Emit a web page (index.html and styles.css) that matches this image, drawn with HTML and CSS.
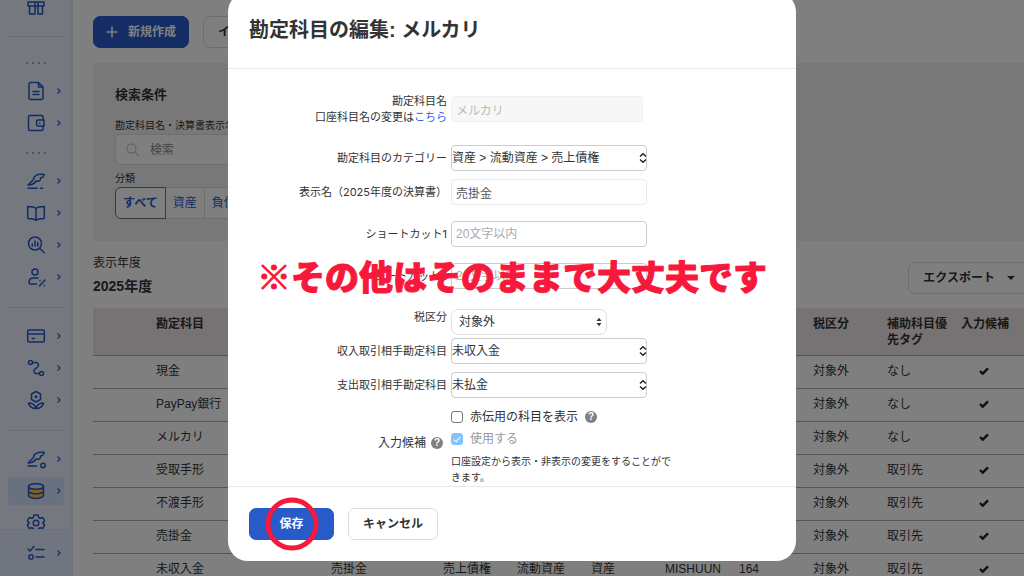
FILE: index.html
```html
<!DOCTYPE html>
<html lang="ja">
<head>
    <meta charset="UTF-8">
    <meta name="viewport" content="width=device-width, initial-scale=1.0">
    <title>勘定科目の編集</title>
    <link rel="stylesheet" href="styles.css">
</head>
<body>

    <div class="app">
        <!-- Sidebar -->
        <aside class="sidebar">
            <nav class="sidebar-nav">
                <a href="#" class="nav-item" aria-label="特典">
                    <svg class="icon" viewBox="0 0 20 20"><path d="M2 6h16v4H2zM3.500 10v8h5.500v-8M12 10v8h4.500v-8M9 6v4M12 6v4"/></svg>
                </a>
                <hr class="nav-divider">
                <div class="nav-dots"><i></i><i></i><i></i><i></i></div>
                <a href="#" class="nav-item" aria-label="書類">
                    <svg class="icon" viewBox="0 0 20 20"><path d="M4.500 1.500h8l4.500 4.500v11a1.500 1.500 0 0 1-1.500 1.500h-11A1.500 1.500 0 0 1 3 17V3a1.500 1.500 0 0 1 1.500-1.500zM12.500 1.500V6H17M7 10.500h6M7 13.500h6"/></svg>
                    <svg class="chevron" viewBox="0 0 6 8"><path d="M1.500 1.500 4 4 1.500 6.500"/></svg>
                </a>
                <a href="#" class="nav-item" aria-label="口座">
                    <svg class="icon" viewBox="0 0 20 20"><path d="M17 6.500V4a1.500 1.500 0 0 0-1.500-1.500H4A1.500 1.500 0 0 0 2.500 4v12A1.500 1.500 0 0 0 4 17.500h11.500A1.500 1.500 0 0 0 17 16v-2.500M12 7h6v6h-6a1.500 1.500 0 0 1-1.500-1.500v-3A1.500 1.500 0 0 1 12 7zM13.500 10h.5"/></svg>
                    <svg class="chevron" viewBox="0 0 6 8"><path d="M1.500 1.500 4 4 1.500 6.500"/></svg>
                </a>
                <div class="nav-dots"><i></i><i></i><i></i><i></i></div>
                <a href="#" class="nav-item" aria-label="記帳">
                    <svg class="icon" viewBox="0 0 20 20"><path d="M2 14 7.500 8.500C7.500 5 11 2.500 18.200 3.500c-.3 2-1.500 3.200-3.700 3.500.5 2.500-1.700 4-4.500 3-1.500 2.500-3.500 4-8 4M2 17.200h9M14.500 17.200h2"/></svg>
                    <svg class="chevron" viewBox="0 0 6 8"><path d="M1.500 1.500 4 4 1.500 6.500"/></svg>
                </a>
                <a href="#" class="nav-item" aria-label="帳簿">
                    <svg class="icon" viewBox="0 0 20 20"><path d="M10 5.500C8.500 4 6 3.500 1.700 3.500v12c4.300 0 6.800.5 8.300 2 1.500-1.500 4-2 8.300-2v-12c-4.300 0-6.800.5-8.300 2zM10 5.500v12"/></svg>
                    <svg class="chevron" viewBox="0 0 6 8"><path d="M1.500 1.500 4 4 1.500 6.500"/></svg>
                </a>
                <a href="#" class="nav-item" aria-label="分析">
                    <svg class="icon" viewBox="0 0 20 20"><circle cx="9" cy="8.500" r="6.500"/><path d="m13.700 13.200 4.500 4.500M6.300 9v2M9 6v5M11.700 7.500V11"/></svg>
                    <svg class="chevron" viewBox="0 0 6 8"><path d="M1.500 1.500 4 4 1.500 6.500"/></svg>
                </a>
                <a href="#" class="nav-item" aria-label="税務">
                    <svg class="icon" viewBox="0 0 20 20"><circle cx="9" cy="5" r="3"/><path d="M10.500 17H4.500A1.500 1.500 0 0 1 3 15.500C3 12.500 5 11 7.500 11H12M19 13l-5.500 6M14 13.500v.2M18.500 18.500v.2"/></svg>
                    <svg class="chevron" viewBox="0 0 6 8"><path d="M1.500 1.500 4 4 1.500 6.500"/></svg>
                </a>
                <hr class="nav-divider">
                <a href="#" class="nav-item" aria-label="カード">
                    <svg class="icon" viewBox="0 0 20 20"><rect x="1.700" y="4" width="16.600" height="12" rx="1.500"/><path d="M1.700 8h16.600M6 12.500h2.500"/></svg>
                    <svg class="chevron" viewBox="0 0 6 8"><path d="M1.500 1.500 4 4 1.500 6.500"/></svg>
                </a>
                <a href="#" class="nav-item" aria-label="連携">
                    <svg class="icon" viewBox="0 0 20 20"><circle cx="4.500" cy="4.500" r="2"/><circle cx="15.500" cy="15.500" r="2"/><path d="M6.500 4.500H10a2.500 2.500 0 0 1 2 4l-3.500 3a2.500 2.500 0 0 0 1.500 4h3.500"/></svg>
                    <svg class="chevron" viewBox="0 0 6 8"><path d="M1.500 1.500 4 4 1.500 6.500"/></svg>
                </a>
                <a href="#" class="nav-item" aria-label="開業">
                    <svg class="icon" viewBox="0 0 20 20"><path d="m10 1.500 4.500 2.500v5.500L10 12 5.500 9.500V4zM10 18.500c-4.500 0-6.500-1.500-7.500-5.500 4 0 6.500 1.500 7.500 5.500zM10 18.500c4.500 0 6.500-1.500 7.500-5.500-4 0-6.500 1.500-7.500 5.500z"/><circle class="fill" cx="10" cy="6.800" r="1.500"/></svg>
                    <svg class="chevron" viewBox="0 0 6 8"><path d="M1.500 1.500 4 4 1.500 6.500"/></svg>
                </a>
                <hr class="nav-divider">
                <a href="#" class="nav-item" aria-label="記帳設定">
                    <svg class="icon" viewBox="0 0 20 20"><path d="M2 14 7.500 8.500C7.500 5 11 2.500 18.200 3.500c-.3 2-1.500 3.200-3.700 3.500.5 2.500-1.700 4-4.500 3-1.500 2.500-3.500 4-8 4M2 17h8.500"/><circle cx="17" cy="16.500" r="2.200"/></svg>
                    <svg class="chevron" viewBox="0 0 6 8"><path d="M1.500 1.500 4 4 1.500 6.500"/></svg>
                </a>
                <a href="#" class="nav-item active" aria-label="マスタ">
                    <svg class="icon" viewBox="0 0 20 20"><path class="gold" d="M2.500 5.500v9c0 1.500 3.500 3 7.500 3s7.500-1.500 7.500-3v-9"/><ellipse class="pale" cx="10" cy="5.500" rx="7.500" ry="2.800"/><path d="M2.500 10c0 1.500 3.500 3 7.500 3s7.500-1.500 7.500-3"/></svg>
                    <svg class="chevron" viewBox="0 0 6 8"><path d="M1.500 1.500 4 4 1.500 6.500"/></svg>
                </a>
                <a href="#" class="nav-item" aria-label="設定">
                    <svg class="icon" viewBox="0 0 20 20"><path d="M8 2h4l.7 2.500 1.500.8 2.500-.8 1.900 3.400L16.800 10l1.800 2.100-1.900 3.400-2.500-.8-1.500.8L12 18H8l-.7-2.500-1.500-.8-2.500.8-1.900-3.400L3.200 10 1.400 7.900l1.900-3.400 2.500.8 1.500-.8z"/><circle cx="10" cy="10" r="2.800"/></svg>
                </a>
            </nav>
            <div class="sidebar-footer">
                <a href="#" class="nav-item" aria-label="やること">
                    <svg class="icon" viewBox="0 0 20 20"><path d="m2 6 2 2 4-4.500M10 6.500h8M10 14h8"/><rect x="3" y="12" width="4" height="4" rx="1"/></svg>
                    <svg class="chevron" viewBox="0 0 6 8"><path d="M1.500 1.500 4 4 1.500 6.500"/></svg>
                </a>
            </div>
        </aside>

        <!-- Account list page -->
        <main class="main">
            <div class="content">
                <div class="actions">
                    <button class="btn btn-primary btn-create">
                        <svg class="plus" viewBox="0 0 12 12"><path d="M6 .5v11M.5 6h11"/></svg>
                        新規作成
                    </button>
                    <button class="btn">インポート</button>
                </div>

                <section class="search-panel">
                    <h2>検索条件</h2>
                    <label class="search-label" for="keyword">勘定科目名・決算書表示名</label>
                    <div class="search-box">
                        <svg viewBox="0 0 14 14"><circle cx="5.500" cy="5.500" r="4.500"/><path d="m9 9 4 4"/></svg>
                        <input id="keyword" type="text" placeholder="検索">
                    </div>
                    <div class="search-label">分類</div>
                    <div class="tabs">
                        <button class="tab selected">すべて</button>
                        <button class="tab">資産</button>
                        <button class="tab">負債</button>
                    </div>
                </section>

                <div class="year-bar">
                    <div>
                        <div class="year-label">表示年度</div>
                        <div class="year-value">2025年度</div>
                    </div>
                    <button class="btn btn-export">エクスポート<span class="caret"></span></button>
                </div>

                <table class="accounts">
                    <colgroup>
                        <col class="col-lead"><col class="col-name"><col class="col-display">
                        <col class="col"><col class="col"><col class="col"><col class="col"><col class="col"><col class="col"><col class="col">
                        <col>
                    </colgroup>
                    <thead>
                        <tr><th></th><th>勘定科目</th><th></th><th></th><th></th><th></th><th></th><th></th><th>税区分</th><th>補助科目優先タグ</th><th>入力候補</th></tr>
                    </thead>
                    <tbody>
                        <tr><td></td><td>現金</td><td></td><td></td><td></td><td></td><td></td><td></td><td>対象外</td><td>なし</td><td><svg class="tick" viewBox="0 0 10 8"><path d="m1 4 2.700 2.700L9 1.300"/></svg></td></tr>
                        <tr><td></td><td>PayPay銀行</td><td></td><td></td><td></td><td></td><td></td><td></td><td>対象外</td><td>なし</td><td><svg class="tick" viewBox="0 0 10 8"><path d="m1 4 2.700 2.700L9 1.300"/></svg></td></tr>
                        <tr><td></td><td>メルカリ</td><td></td><td></td><td></td><td></td><td></td><td></td><td>対象外</td><td>なし</td><td><svg class="tick" viewBox="0 0 10 8"><path d="m1 4 2.700 2.700L9 1.300"/></svg></td></tr>
                        <tr><td></td><td>受取手形</td><td></td><td></td><td></td><td></td><td></td><td></td><td>対象外</td><td>取引先</td><td><svg class="tick" viewBox="0 0 10 8"><path d="m1 4 2.700 2.700L9 1.300"/></svg></td></tr>
                        <tr><td></td><td>不渡手形</td><td></td><td></td><td></td><td></td><td></td><td></td><td>対象外</td><td>取引先</td><td><svg class="tick" viewBox="0 0 10 8"><path d="m1 4 2.700 2.700L9 1.300"/></svg></td></tr>
                        <tr><td></td><td>売掛金</td><td></td><td></td><td></td><td></td><td></td><td></td><td>対象外</td><td>取引先</td><td><svg class="tick" viewBox="0 0 10 8"><path d="m1 4 2.700 2.700L9 1.300"/></svg></td></tr>
                        <tr><td></td><td>未収入金</td><td>売掛金</td><td>売上債権</td><td>流動資産</td><td>資産</td><td>MISHUUN</td><td>164</td><td>対象外</td><td>取引先</td><td><svg class="tick" viewBox="0 0 10 8"><path d="m1 4 2.700 2.700L9 1.300"/></svg></td></tr>
                    </tbody>
                </table>
            </div>
        </main>
    </div>

    <!-- Edit dialog -->
    <div class="overlay">
        <form class="modal" role="dialog" aria-labelledby="modal-title">
            <header class="modal-header">
                <h1 id="modal-title">勘定科目の編集: メルカリ</h1>
            </header>

            <div class="modal-body">
                <div class="row gap-large">
                    <label for="name">勘定科目名<br>口座科目名の変更は<a href="#">こちら</a></label>
                    <input id="name" class="field field-disabled" type="text" value="メルカリ" disabled>
                </div>
                <div class="row gap-small">
                    <label for="category">勘定科目のカテゴリー</label>
                    <div class="select">
                        <select id="category"><option>資産 &gt; 流動資産 &gt; 売上債権</option></select>
                        <svg class="updown" viewBox="0 0 8 10"><path d="M1 3.500 4 .8l3 2.700M1 6.500l3 2.700 3-2.700"/></svg>
                    </div>
                </div>
                <div class="row gap-medium">
                    <label for="display">表示名（2025年度の決算書）</label>
                    <input id="display" class="field field-light" type="text" value="売掛金">
                </div>
                <div class="row gap-medium">
                    <label for="short1">ショートカット1</label>
                    <input id="short1" class="field" type="text" placeholder="20文字以内">
                </div>
                <div class="row row-noted gap-large">
                    <label for="short2">ショートカット2</label>
                    <input id="short2" class="field" type="text" placeholder="20文字以内">
                    <svg class="note"><text x="50%" y="50%" dy="14">※その他はそのままで大丈夫です</text></svg>
                </div>
                <div class="row row-top gap-tiny">
                    <label for="tax">税区分</label>
                    <div class="select select-round">
                        <select id="tax"><option>対象外</option></select>
                        <svg class="updown solid" viewBox="0 0 8 10"><path d="M1.500 4 4 .8 6.500 4zM1.500 6 4 9.200 6.500 6z"/></svg>
                    </div>
                </div>
                <div class="row gap-small">
                    <label for="income">収入取引相手勘定科目</label>
                    <div class="select">
                        <select id="income"><option>未収入金</option></select>
                        <svg class="updown" viewBox="0 0 8 10"><path d="M1 3.500 4 .8l3 2.700M1 6.500l3 2.700 3-2.700"/></svg>
                    </div>
                </div>
                <div class="row gap-small">
                    <label for="expense">支出取引相手勘定科目</label>
                    <div class="select">
                        <select id="expense"><option>未払金</option></select>
                        <svg class="updown" viewBox="0 0 8 10"><path d="M1 3.500 4 .8l3 2.700M1 6.500l3 2.700 3-2.700"/></svg>
                    </div>
                </div>
                <div class="row">
                    <span></span>
                    <label class="check"><input type="checkbox">赤伝用の科目を表示 <span class="help">?</span></label>
                </div>
                <div class="row row-top">
                    <div class="group-label">入力候補 <span class="help">?</span></div>
                    <div>
                        <label class="check check-disabled"><input type="checkbox" checked disabled>使用する</label>
                        <p class="hint">口座設定から表示・非表示の変更をすることができます。</p>
                    </div>
                </div>
            </div>

            <footer class="modal-footer">
                <button type="button" class="btn btn-primary btn-save">保存<span class="ring"></span></button>
                <button type="button" class="btn">キャンセル</button>
            </footer>
        </form>
    </div>

</body>
</html>
```
FILE: styles.css
```css
*, *::before, *::after {
    box-sizing: border-box;
    margin: 0;
    padding: 0;
}

body {
    font-family: "Liberation Sans", "Noto Sans CJK JP", sans-serif;
    font-size: 12px;
    line-height: 16px;
    color: #333;
    background: #fff;
    overflow: hidden;
}

button, input, select {
    font: inherit;
    color: inherit;
}

a {
    color: #2864f0;
    text-decoration: none;
}

.app {
    display: flex;
    height: 100vh;
    overflow: hidden;
}

/* Sidebar */
.sidebar {
    flex: none;
    display: flex;
    flex-direction: column;
    width: 73px;
    background: #ebf3ff;
    border-right: 2px solid #dce8ff;
}

.sidebar-nav {
    flex: 1;
    display: flex;
    flex-direction: column;
    min-height: 0;
    margin-top: -10px;
    overflow: hidden;
}

.nav-item {
    flex: none;
    display: flex;
    align-items: center;
    gap: 12px;
    height: 28px;
    margin: 2px 7px 2px 8px;
    padding-left: 18px;
    border-radius: 4px;
}

.nav-item.active {
    background: #d2e3ff;
}

.icon {
    width: 20px;
    height: 20px;
    fill: none;
    stroke: #2456c8;
    stroke-width: 1.5;
    stroke-linecap: round;
    stroke-linejoin: round;
}

.icon .fill {
    fill: #2456c8;
    stroke: none;
}

.icon .gold {
    fill: #ffc03c;
}

.icon .pale {
    fill: #d2e3ff;
}

.chevron {
    width: 6px;
    height: 8px;
    margin-left: -2px;
    fill: none;
    stroke: #2864f0;
    stroke-width: 1.3;
}

.nav-divider {
    flex: none;
    height: 1px;
    margin: 14px 8px 12px;
    border: 0;
    background: #cddcf8;
}

.nav-dots {
    display: flex;
    justify-content: center;
    gap: 4px;
    padding: 13px 0 11px;
}

.nav-dots i {
    width: 2px;
    height: 2px;
    border-radius: 1px;
    background: #6e92e0;
}

.sidebar-footer {
    padding: 7px 0;
    background: #e1ebff;
    border-top: 1px solid #d2e0fa;
}

/* Page content */
.main {
    flex: 1;
    min-width: 0;
    padding: 16px 0 0 20px;
    overflow: hidden;
}

.content {
    margin-right: -10px;
}

.btn {
    display: inline-flex;
    align-items: center;
    justify-content: center;
    height: 32px;
    padding: 0 14px;
    border: 1px solid #dcdcdc;
    border-radius: 7px;
    background: #fff;
    font-weight: bold;
    white-space: nowrap;
    cursor: pointer;
}

.btn-primary {
    border-color: #285ac8;
    background: #285ac8;
    color: #fff;
}

.actions {
    display: flex;
    gap: 14px;
    margin-bottom: 15px;
}

.btn-create {
    gap: 10px;
    width: 96px;
    padding: 0;
}

.plus {
    width: 12px;
    height: 12px;
    fill: none;
    stroke: #fff;
    stroke-width: 1.5;
}

.search-panel {
    height: 178px;
    padding: 24px 22px;
    background: #f0f0f0;
}

.search-panel h2 {
    margin-bottom: 15px;
    font-size: 13px;
    line-height: 16px;
}

.search-label {
    display: block;
    font-size: 10px;
    line-height: 16px;
}

.search-box {
    display: flex;
    align-items: center;
    gap: 10px;
    width: 320px;
    height: 31px;
    margin-bottom: 6px;
    padding: 0 10px;
    border: 1px solid #dcdcdc;
    border-radius: 6px;
    background: #fff;
}

.search-box svg {
    width: 14px;
    height: 14px;
    fill: none;
    stroke: #ccc;
    stroke-width: 1.3;
}

.search-box input {
    border: 0;
    background: none;
}

.search-box input::placeholder {
    color: #8c8c8c;
}

.tabs {
    display: flex;
}

.tab {
    height: 32px;
    padding: 0 7px;
    border: 1px solid #dcdcdc;
    border-left: 0;
    background: #fff;
    color: #285ac8;
}

.tab.selected {
    border: 1px solid #737373;
    border-radius: 6px 0 0 6px;
    font-weight: bold;
}

.year-bar {
    display: flex;
    justify-content: space-between;
    padding: 14px 0;
}

.year-label {
    margin-bottom: 7px;
}

.year-value {
    font-size: 14px;
    font-weight: bold;
}

.btn-export {
    margin-top: 7px;
    margin-right: 4px;
    gap: 12px;
}

.caret {
    border: 4px solid transparent;
    border-top-color: #333;
    border-bottom: 0;
}

/* Accounts table */
.accounts {
    width: 100%;
    table-layout: fixed;
    border-collapse: collapse;
}

.col-lead { width: 55px; }
.col-name { width: 175px; }
.col-display { width: 112px; }
.col { width: 74px; }

.accounts th,
.accounts td {
    padding: 7px 0 9px 8px;
    border-bottom: 1px solid #aaa;
    line-height: 16px;
    text-align: left;
    vertical-align: top;
    white-space: nowrap;
}

.accounts th {
    height: 47px;
    padding: 8px 4px 7px 8px;
    background: #eee6e8;
    white-space: normal;
}

.tick {
    width: 10px;
    height: 8px;
    margin-left: 18px;
    fill: none;
    stroke: #222;
    stroke-width: 2.4;
}

/* Dialog */
.overlay {
    position: fixed;
    inset: 0;
    display: flex;
    justify-content: center;
    align-items: flex-end;
    padding-bottom: 15px;
    background: rgba(0, 0, 0, 0.5);
}

.modal {
    width: 100%;
    max-width: 568px;
    border-radius: 20px;
    background: #fff;
}

.modal-header {
    padding: 26px 21px;
    border-bottom: 1px solid #e9e9e9;
}

.modal-header h1 {
    font-size: 20px;
    line-height: 24px;
}

.modal-body {
    padding: 24px 21px 0;
}

.row {
    display: grid;
    grid-template-columns: 198px 1fr;
    column-gap: 4px;
    align-items: center;
}

.row-top {
    align-items: start;
}

.row > label:first-child {
    font-family: Inter, "Noto Sans CJK JP", sans-serif;
    font-size: 11px;
    text-align: right;
    white-space: nowrap;
}

.gap-large { margin-bottom: 20px; }
.gap-medium { margin-bottom: 16px; }
.gap-small { margin-bottom: 8px; }
.gap-tiny { margin-bottom: 3px; }

.field {
    width: 196px;
    height: 26px;
    padding: 0 4px;
    border: 1px solid #ccc;
    border-radius: 4px;
    background: #fff;
    color: #555;
}

.field::placeholder {
    color: #aaa;
}

.field-light {
    border-color: #e9e9e9;
}

.field-disabled {
    width: 192px;
    border-color: #f0f0f0;
    background: #f7f7f7;
    color: #bbb;
}

.select {
    position: relative;
    width: 196px;
}

.select select {
    display: block;
    width: 100%;
    height: 26px;
    border: 1px solid #ccc;
    border-radius: 4px;
    background: #fff;
    appearance: none;
}

.updown {
    position: absolute;
    top: 8px;
    right: 0;
    width: 8px;
    height: 10px;
    fill: none;
    stroke: #222;
    stroke-width: 1.5;
    pointer-events: none;
}

.select-round {
    width: 156px;
}

.select-round select {
    padding-left: 7px;
    border-color: #e0e0e0;
    border-radius: 7px;
}

.updown.solid {
    right: 4px;
    fill: #333;
    stroke: none;
}

.row-noted {
    position: relative;
}

.note {
    position: absolute;
    inset: 0;
    width: 100%;
    height: 100%;
    overflow: visible;
    pointer-events: none;
}

.note text {
    font-family: "Noto Sans CJK JP", sans-serif;
    font-size: 34px;
    font-weight: 900;
    text-anchor: middle;
    fill: #f8183c;
    stroke: #f8183c;
    stroke-width: 1px;
    stroke-linejoin: round;
}

.check {
    display: flex;
    align-items: center;
    gap: 7px;
    height: 22px;
}

.check-disabled {
    color: #999;
}

.check input {
    display: flex;
    align-items: center;
    justify-content: center;
    width: 12px;
    height: 12px;
    border: 1px solid #767676;
    border-radius: 3px;
    background: #fff;
    appearance: none;
}

.check input:checked {
    border-color: #7fc3ff;
    background: #7fc3ff;
}

.check input:checked::after {
    content: "";
    width: 4px;
    height: 7px;
    margin-bottom: 2px;
    border: solid #fff;
    border-width: 0 1px 1px 0;
    transform: rotate(40deg);
}

.group-label {
    display: flex;
    align-items: center;
    justify-content: flex-end;
    gap: 5px;
    height: 30px;
    padding-right: 4px;
}

.help {
    width: 12px;
    height: 12px;
    border-radius: 6px;
    background: #808080;
    color: #fff;
    font-size: 10px;
    font-weight: bold;
    line-height: 12px;
    text-align: center;
}

.hint {
    max-width: 220px;
    margin-top: 4px;
    font-size: 10px;
    line-height: 16px;
}

.modal-footer {
    display: flex;
    gap: 14px;
    padding: 21px;
    border-top: 1px solid #e9e9e9;
}

.btn-save {
    position: relative;
    width: 85px;
}

.ring {
    position: absolute;
    top: 50%;
    left: 50%;
    width: 53px;
    height: 53px;
    border: 5px solid #f8183c;
    border-radius: 50%;
    transform: translate(-50%, -50%);
}
```
